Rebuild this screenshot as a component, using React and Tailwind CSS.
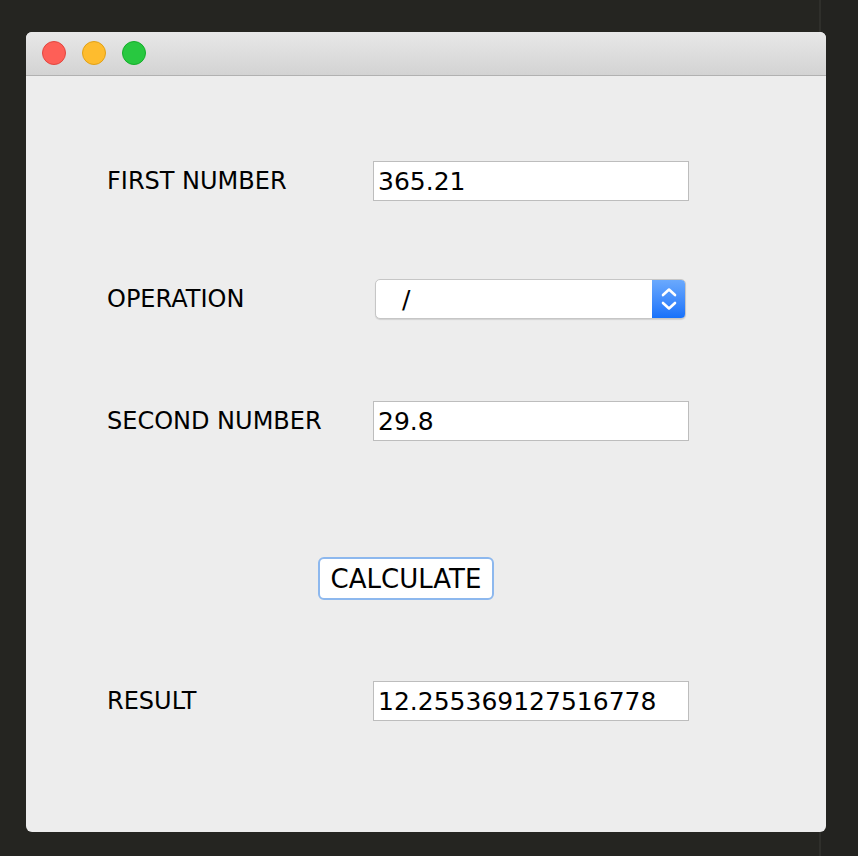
import React from 'react';

const font = { fontFamily: '"DejaVu Sans", "Liberation Sans", sans-serif' };

const Field = ({ value }) => (
  <div className="w-[316px] h-[40px] bg-white border border-[#bdbdbd] pl-[4px] flex items-center text-[25px] leading-none text-black">
    {value}
  </div>
);

const Label = ({ children }) => (
  <div className="w-[266px] text-[24px] leading-none text-black">{children}</div>
);

const App = () => {
  return (
    <div
      className="w-[858px] h-[856px] bg-[linear-gradient(to_right,#252521_819px,#2f2f2b_819px,#2f2f2b_821px,#232320_821px)] pt-[32px] pl-[26px]"
      style={font}
    >
      <div className="w-[800px] h-[800px] rounded-[6px] overflow-hidden bg-[#ededed] flex flex-col">
        {/* title bar */}
        <div className="h-[44px] bg-gradient-to-b from-[#e8e8e8] to-[#d3d3d3] border-b border-[#b1b1b1] flex items-center gap-[16px] pl-[16px] pb-[2px]">
          <span className="w-[24px] h-[24px] rounded-full bg-[#fe5f57] border border-[#e2463f]" />
          <span className="w-[24px] h-[24px] rounded-full bg-[#febc2e] border border-[#e1a116]" />
          <span className="w-[24px] h-[24px] rounded-full bg-[#28c840] border border-[#14ae2a]" />
        </div>

        <div className="flex flex-col pl-[81px]">
          <div className="mt-[85px] flex items-center">
            <Label>FIRST NUMBER</Label>
            <Field value="365.21" />
          </div>

          <div className="mt-[78px] flex items-center">
            <Label>OPERATION</Label>
            <div className="ml-[2px] w-[311px] h-[40px] rounded-[5px] bg-white border border-[#c6c6c6] shadow-[0_1px_1px_rgba(0,0,0,0.12)] flex overflow-hidden">
              <div className="flex-1 flex items-center pl-[26px] text-[25px] leading-none text-black">/</div>
              <div className="w-[33px] h-full bg-gradient-to-b from-[#6aa9fd] to-[#1671fa] flex items-center justify-center">
                <svg width="18" height="28" viewBox="0 0 18 28" fill="none" stroke="white" strokeWidth="2.6" strokeLinecap="round" strokeLinejoin="round">
                  <path d="M3 10 L9 4.5 L15 10" />
                  <path d="M3 18 L9 23.5 L15 18" />
                </svg>
              </div>
            </div>
          </div>

          <div className="mt-[82px] flex items-center">
            <Label>SECOND NUMBER</Label>
            <Field value="29.8" />
          </div>

          <div className="mt-[116px] flex">
            <button className="ml-[211px] w-[176px] h-[43px] rounded-[6px] bg-white border-2 border-[#8db8ee] flex items-center justify-center text-[26px] leading-none text-black">
              CALCULATE
            </button>
          </div>

          <div className="mt-[81px] flex items-center">
            <Label>RESULT</Label>
            <Field value="12.255369127516778" />
          </div>
        </div>
      </div>
    </div>
  );
};

export default App;
